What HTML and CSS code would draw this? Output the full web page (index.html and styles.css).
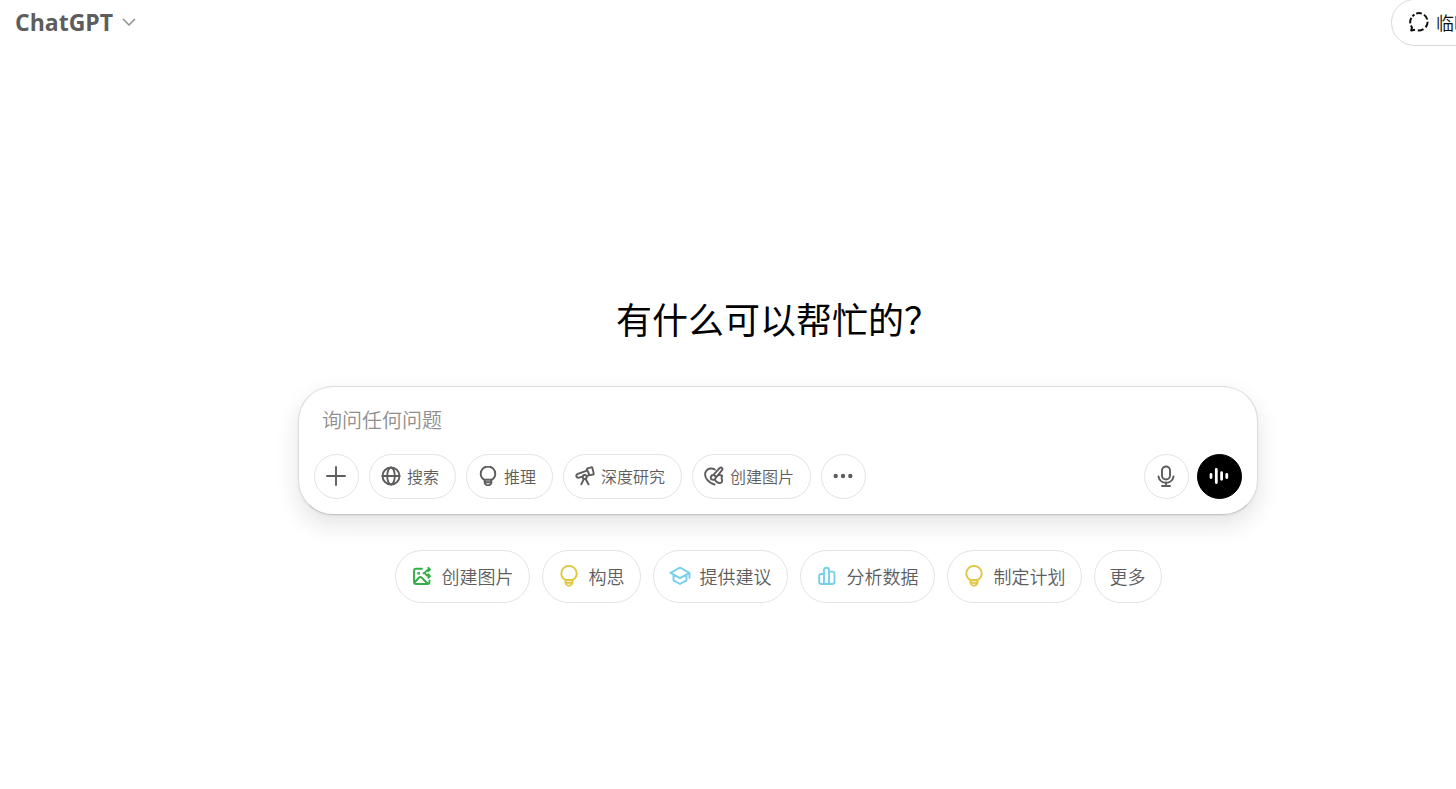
FILE: index.html
```html
<!DOCTYPE html>
<html lang="zh-CN">
<head>
  <meta charset="UTF-8">
  <meta name="viewport" content="width=device-width, initial-scale=1.0">
  <title>ChatGPT</title>
  <link rel="stylesheet" href="styles.css">
</head>
<body>
  <div class="page">
    <header class="header">
      <button class="model-button">
        ChatGPT
        <svg class="chevron" viewBox="0 0 16 16"><path d="M2 5l6 6 6-6"/></svg>
      </button>
      <button class="pill temp-button">
        <svg class="icon" viewBox="0 0 20 20">
          <path d="M7.2 1.6Q10 .6 12.8 1.6M15 2.8Q17.5 4.6 18.3 7.4M18.7 9.8Q18.5 13 16.7 15.4M14.5 17.2Q12 18.7 8.8 18.6M1.3 11.4Q.9 8.6 2.2 5.8M3.4 4.2L5.4 2.5M1.9 13.5L3 15.6 2.2 18.5 6 17.7"/>
        </svg>
        临时
      </button>
    </header>

    <main class="main">
      <h1>有什么可以帮忙的？</h1>

      <!-- Composer -->
      <form class="composer">
        <input class="prompt" type="text" aria-label="询问任何问题" placeholder="询问任何问题">
        <div class="toolbar">
          <button type="button" class="pill round" aria-label="添加">
            <svg class="icon" viewBox="0 0 20 20"><path d="M10 1v18M1 10h18"/></svg>
          </button>
          <button type="button" class="pill tool">
            <svg class="icon" viewBox="0 0 20 20"><circle cx="10" cy="10" r="8.5"/><ellipse cx="10" cy="10" rx="3.8" ry="8.5"/><path d="M1.5 10h17"/></svg>
            搜索
          </button>
          <button type="button" class="pill tool">
            <svg class="icon" viewBox="0 0 20 20"><path d="M7 14.2C4.3 12.9 2.7 10.6 2.7 7.8a7.3 7.3 0 0 1 14.6 0c0 2.8-1.6 5.1-4.3 6.4M6.6 13.8h6.8V16a3.4 3.4 0 0 1-6.8 0zM6.8 16.2h6.4"/></svg>
            推理
          </button>
          <button type="button" class="pill tool">
            <svg class="icon" viewBox="0 0 20 20"><path d="M12.5 2.4l3.7-1.1q.9-.2 1.200.7l1.300 5.400q.2.900-.7 1.100l-2.600.6q-.8.100-1.100-.6l-2.400-5q-.2-.8.600-1.100zM12 4.600L2.800 7.900q-1.900.8-1.400 2.500.7 1.700 2.700 1.200l3.400-1M11.900 10l2.600-.8M8.900 12.800L6.300 18.300M10.500 12.800l3 5.500"/><circle cx="9.700" cy="11" r="2"/></svg>
            深度研究
          </button>
          <button type="button" class="pill tool">
            <svg class="icon" viewBox="0 0 20 20"><path d="M10.800 3.600C8.200 1.700 3.900 2.100 2 5.200c-3 5.200 2.400 11.700 8.500 13.300M9.200 9.200l6.300-7q1.300-1.200 2.500-.3 1 1.200-.1 2.500l-6 7.200M7.300 13.400c-1.500-2.500.4-4.800 2.600-4.200 2.300.7 2.500 3.600.4 4.300-1 .3-2 .2-3-.1zM14 9.300c1.600-.6 3.300-.3 4.300.8-1.200 1.300-.8 2.400-.3 3.600.7 2.300-1 3.800-3 3.300-2.200-.5-3.400-1.700-4.400-3.200"/></svg>
            创建图片
          </button>
          <button type="button" class="pill round" aria-label="更多工具">
            <svg class="icon solid" viewBox="0 0 20 20"><circle cx="2.700" cy="10" r="2.200"/><circle cx="10" cy="10" r="2.200"/><circle cx="17.300" cy="10" r="2.200"/></svg>
          </button>
          <div class="voice">
            <button type="button" class="pill round" aria-label="听写">
              <svg class="icon mic" viewBox="0 0 20 22"><rect x="6" y="1.500" width="8" height="13" rx="4"/><path d="M2.500 11.500a7.600 7.600 0 0 0 15 0M10 17.500V21M6 21h8"/></svg>
            </button>
            <button type="button" class="pill round dark" aria-label="语音模式">
              <svg class="icon" viewBox="0 0 20 20"><path d="M2 8.500v3M7.300 3.500v13M12.600 6.700v6.600M17.800 8.500v3"/></svg>
            </button>
          </div>
        </div>
      </form>

      <!-- Suggestions -->
      <div class="suggestions">
        <button class="pill chip">
          <svg class="icon green" viewBox="0 0 22 22"><path d="M11 3.800H5q-2 0-2 2V17q0 2 2 2h11.500q2 0 2-2v-1.500M3.500 17.500l4.600-5q1.200-1.200 2.400 0l6.300 6.200M12.500 8.300C15 8.300 14.500 4.500 18.500 4.500M16.500 10.500q1 .8 2 .8M17.300 2.800l1.700 1.700-1.700 1.700M17.300 9.300l1.700 1.900-1.700 1.700M14.500 9l2 1.800"/><circle cx="7.700" cy="8.300" r=".6"/></svg>
          创建图片
        </button>
        <button class="pill chip">
          <svg class="icon yellow" viewBox="0 0 22 22"><path d="M8 15.3C5 13.9 3.3 11.5 3.3 8.6a7.7 7.7 0 0 1 15.4 0c0 2.9-1.700 5.300-4.700 6.700M7.500 15h7v2.200a3.500 3.500 0 0 1-7 0zM7.700 17.700h6.600"/></svg>
          构思
        </button>
        <button class="pill chip">
          <svg class="icon blue" viewBox="0 0 22 22"><path d="M11 2.500L1.500 7.900 11 13.200l9.500-5.300zM4.500 10v5.400L11 19l6.500-3.600V10M20.500 8v5"/></svg>
          提供建议
        </button>
        <button class="pill chip">
          <svg class="icon blue" viewBox="0 0 22 22"><path d="M8 19V5q0-2.300 2.500-2.300T13 5v14M8 9H5.500q-2.300 0-2.300 2.300v5.400Q3.200 19 5.500 19h10.700q2.300 0 2.300-2.300V8.900q0-2.300-2.300-2.300H13"/></svg>
          分析数据
        </button>
        <button class="pill chip">
          <svg class="icon yellow" viewBox="0 0 22 22"><path d="M8 15.3C5 13.9 3.3 11.5 3.3 8.6a7.7 7.7 0 0 1 15.4 0c0 2.9-1.700 5.300-4.700 6.700M7.500 15h7v2.200a3.500 3.500 0 0 1-7 0zM7.700 17.700h6.600"/></svg>
          制定计划
        </button>
        <button class="pill chip">更多</button>
      </div>
    </main>
  </div>
</body>
</html>
```
FILE: styles.css
```css
* {
  box-sizing: border-box;
}

body {
  margin: 0;
  background: #fff;
  color: #5d5d5d;
  font-family: "Noto Sans CJK SC", "Noto Sans", sans-serif;
  font-weight: 350;
  overflow: hidden;
}

/* the page runs past the right edge of the window */
.page {
  width: calc(100% + 100px);
}

button,
input {
  font-family: inherit;
  font-weight: inherit;
  color: inherit;
}

button {
  background: none;
  border: none;
  padding: 0;
  white-space: nowrap;
  cursor: pointer;
}

.header {
  display: flex;
  align-items: center;
  justify-content: space-between;
  height: 45px;
  padding: 0 65px 0 15px;
}

.model-button {
  display: flex;
  align-items: center;
  gap: 8px;
  padding-bottom: 2px;
  font-family: "Open Sans", sans-serif;
  font-size: 23px;
  font-weight: 700;
}

.chevron {
  width: 16px;
  height: 16px;
  fill: none;
  stroke: #8f8f8f;
  stroke-width: 1.5;
}

.pill {
  display: flex;
  align-items: center;
  flex-shrink: 0;
  border: 1px solid #e3e3e3;
  border-radius: 30px;
}

.icon {
  width: 20px;
  height: 20px;
  flex-shrink: 0;
  fill: none;
  stroke: currentColor;
  stroke-width: 1.9;
  stroke-linecap: round;
  stroke-linejoin: round;
}

.solid {
  fill: currentColor;
  stroke: none;
}

.temp-button {
  gap: 7px;
  height: 47px;
  padding: 0 18px 2px 17px;
  border-color: #d9d9d9;
  color: #0d0d0d;
  font-size: 18px;
}

.temp-button .icon {
  stroke-linecap: butt;
  stroke-width: 2;
}

.main {
  display: flex;
  flex-direction: column;
  align-items: center;
  padding-top: 245px;
}

h1 {
  margin: 0 0 40px;
  color: #000;
  font-size: 36px;
  line-height: 56px;
  font-weight: 400;
}

.composer {
  width: 960px;
  max-width: 100%;
  padding: 15px;
  border: 1px solid #dcdcdc;
  border-bottom-color: #c4c4c4;
  border-radius: 35px;
  background: #fff;
  box-shadow: 0 10px 24px rgba(0, 0, 0, 0.11), 0 1px 2px rgba(0, 0, 0, 0.06);
}

.prompt {
  display: block;
  width: 100%;
  height: 36px;
  margin-bottom: 16px;
  padding: 0 8px 2px;
  border: none;
  outline: none;
  background: none;
  font-size: 20px;
}

.prompt::placeholder {
  color: #8f8f8f;
  opacity: 1;
}

.toolbar {
  display: flex;
  gap: 10px;
}

.round {
  justify-content: center;
  width: 45px;
  height: 45px;
  padding: 0 1px 1px 0;
}

.tool {
  gap: 6px;
  height: 45px;
  padding: 0 16px 2px 11px;
  font-size: 16px;
}

.voice {
  display: flex;
  gap: 8px;
  margin-left: auto;
}

.mic {
  height: 22px;
}

.dark {
  background: #000;
  border-color: #000;
  color: #fff;
}

.dark .icon {
  stroke-width: 2.8;
}

.suggestions {
  display: flex;
  gap: 12px;
  margin-top: 35px;
}

.chip {
  gap: 9px;
  height: 53px;
  padding: 0 15px 2px;
  font-size: 18px;
}

.chip .icon {
  width: 22px;
  height: 22px;
}

.green {
  color: #35ae47;
}

.yellow {
  color: #e2c541;
}

.blue {
  color: #76d0eb;
}
```
